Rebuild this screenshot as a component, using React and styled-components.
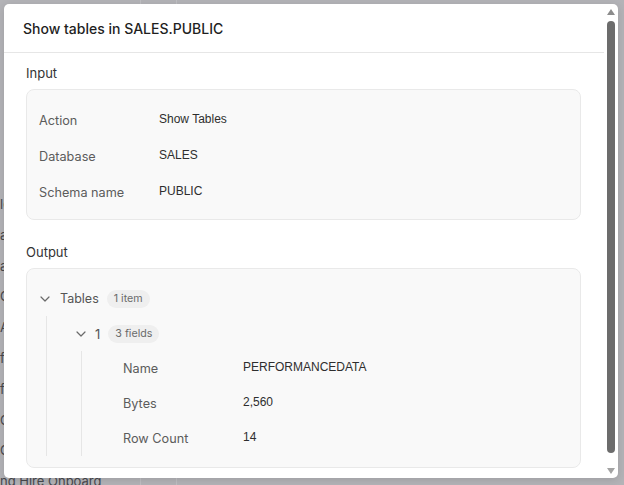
import React from 'react';
import styled, { createGlobalStyle } from 'styled-components';

const GlobalStyle = createGlobalStyle`
  html, body {
    margin: 0;
    padding: 0;
  }
  body {
    width: 624px;
    height: 485px;
    overflow: hidden;
    background: #b3b3b7;
    font-family: Inter, "Noto Sans", sans-serif;
  }
`;

const Backdrop = styled.div`
  position: relative;
  width: 624px;
  height: 485px;
  display: flex;
  overflow: hidden;
`;

const SideList = styled.div`
  width: 140px;
  flex-shrink: 0;
  border-right: 1px solid #bfbfc3;
  display: flex;
  flex-direction: column;
  padding-top: 189px;
`;

const SideItem = styled.div`
  flex-shrink: 0;
  height: 30.8px;
  line-height: 30.8px;
  font-size: 13px;
  color: #48484d;
  white-space: nowrap;
  overflow: hidden;
`;

const NarrowCol = styled.div`
  width: 35px;
  flex-shrink: 0;
  border-right: 1px solid #bfbfc3;
`;

const Modal = styled.div`
  position: absolute;
  top: 4px;
  left: 4px;
  width: 614px;
  height: 474px;
  background: #ffffff;
  border-radius: 5px;
  box-shadow: 0 2px 8px rgba(0, 0, 0, 0.12);
  overflow: hidden;
  display: flex;
`;

const Content = styled.div`
  flex: 1;
  min-width: 0;
  display: flex;
  flex-direction: column;
`;

const Header = styled.div`
  height: 48px;
  flex-shrink: 0;
  display: flex;
  align-items: center;
  padding-left: 19px;
  border-bottom: 1px solid #e6e6e6;
`;

const Title = styled.h2`
  margin: 0;
  font-size: 14px;
  font-weight: 500;
  color: #1f1f1f;
`;

const Body = styled.div`
  padding: 10px 23px 0 22px;
  display: flex;
  flex-direction: column;
`;

const SectionLabel = styled.div`
  font-size: 13px;
  line-height: 20px;
  color: #333333;
  margin-top: ${(p) => (p.$first ? '0' : '22px')};
  margin-bottom: 6px;
`;

const Card = styled.div`
  background: #f9f9f9;
  border: 1px solid #e9e9e9;
  border-radius: 8px;
  padding: ${(p) => p.$pad};
`;

const FieldRow = styled.div`
  display: grid;
  grid-template-columns: 120px 1fr;
  align-items: center;
  height: ${(p) => p.$h}px;
`;

const FieldLabel = styled.span`
  font-size: 12.7px;
  color: #5c5c5c;
`;

const FieldValue = styled.span`
  font-family: "Liberation Sans", Arial, sans-serif;
  font-size: 12px;
  color: #2e2e2e;
  padding-bottom: 3px;
`;

const NodeRow = styled.div`
  display: flex;
  align-items: center;
  height: 35px;
`;

const Chevron = styled.svg`
  width: 10px;
  height: 6px;
  flex-shrink: 0;
  margin-right: ${(p) => p.$gap}px;
`;

const NodeName = styled.span`
  font-size: ${(p) => p.$size}px;
  color: #555555;
  margin-right: 8px;
`;

const Badge = styled.span`
  display: inline-flex;
  align-items: center;
  height: 18px;
  padding: 0 7px;
  border-radius: 9px;
  background: #efefef;
  color: #6b6b6b;
  font-size: 10.7px;
`;

const Children = styled.div`
  margin-left: ${(p) => p.$offset}px;
  border-left: 1px solid #e6e6e6;
  padding-left: ${(p) => p.$indent}px;
`;

const ScrollTrack = styled.div`
  width: 14px;
  flex-shrink: 0;
  display: flex;
  flex-direction: column;
  align-items: center;
  padding: 5px 0 4px;
  box-sizing: border-box;
`;

const Arrow = styled.div`
  width: 0;
  height: 0;
  border-left: 4px solid transparent;
  border-right: 4px solid transparent;
  ${(p) =>
    p.$up
      ? 'border-bottom: 6px solid #8c8c8c;'
      : 'border-top: 6px solid #a3a3a3;'}
`;

const Thumb = styled.div`
  width: 8px;
  flex: 1;
  margin: 6px 0 15px;
  border-radius: 4px;
  background: #6c6c6c;
`;

const ChevronIcon = ({ gap }) => (
  <Chevron $gap={gap} viewBox="0 0 10 6">
    <polyline
      points="1,1 5,5 9,1"
      fill="none"
      stroke="#6a6a6a"
      strokeWidth="1.2"
      strokeLinecap="round"
      strokeLinejoin="round"
    />
  </Chevron>
);

const inputFields = [
  ['Action', 'Show Tables'],
  ['Database', 'SALES'],
  ['Schema name', 'PUBLIC'],
];

const tableFields = [
  ['Name', 'PERFORMANCEDATA'],
  ['Bytes', '2,560'],
  ['Row Count', '14'],
];

const sideItems = ['le', 'a', 'a', 'C', 'A', 'f', 'f', 'C', 'C', 'ng Hire Onboard'];

const App = () => (
  <>
    <GlobalStyle />
    <Backdrop>
      <SideList>
        {sideItems.map((t, i) => (
          <SideItem key={i}>{t}</SideItem>
        ))}
      </SideList>
      <NarrowCol />

      <Modal>
        <Content>
          <Header>
            <Title>Show tables in SALES.PUBLIC</Title>
          </Header>
          <Body>
            <SectionLabel $first>Input</SectionLabel>
            <Card $pad="12px 12px 9px">
              {inputFields.map(([label, value]) => (
                <FieldRow key={label} $h={36}>
                  <FieldLabel>{label}</FieldLabel>
                  <FieldValue>{value}</FieldValue>
                </FieldRow>
              ))}
            </Card>

            <SectionLabel>Output</SectionLabel>
            <Card $pad="12px 12px 11px 13px">
              <NodeRow>
                <ChevronIcon gap={10} />
                <NodeName $size={12.5}>Tables</NodeName>
                <Badge>1 item</Badge>
              </NodeRow>
              <Children $offset={6} $indent={29}>
                <NodeRow>
                  <ChevronIcon gap={9} />
                  <NodeName $size={13}>1</NodeName>
                  <Badge>3 fields</Badge>
                </NodeRow>
                <Children $offset={5} $indent={41}>
                  {tableFields.map(([label, value]) => (
                    <FieldRow key={label} $h={35}>
                      <FieldLabel>{label}</FieldLabel>
                      <FieldValue>{value}</FieldValue>
                    </FieldRow>
                  ))}
                </Children>
              </Children>
            </Card>
          </Body>
        </Content>
        <ScrollTrack>
          <Arrow $up />
          <Thumb />
          <Arrow />
        </ScrollTrack>
      </Modal>
    </Backdrop>
  </>
);

export default App;
